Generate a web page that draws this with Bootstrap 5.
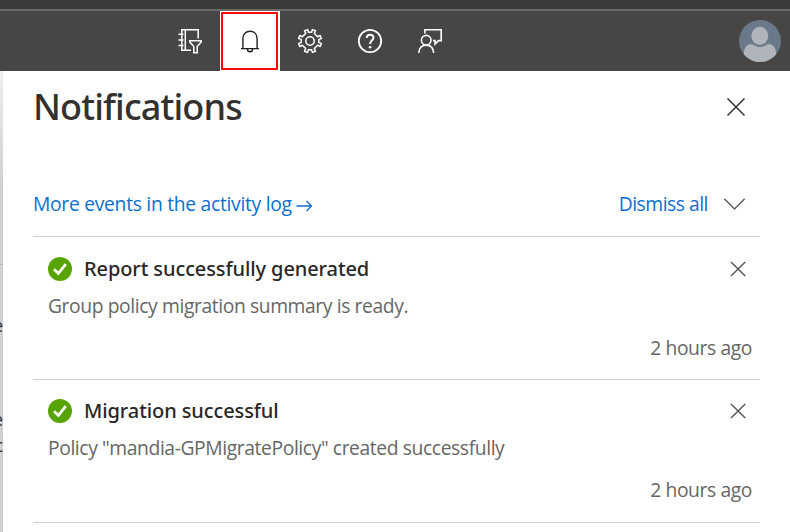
<!DOCTYPE html>
<html lang="en">
<head>
<meta charset="utf-8">
<meta name="viewport" content="width=device-width, initial-scale=1">
<title>Notifications</title>
<link href="https://cdn.jsdelivr.net/npm/bootstrap@5.3.0/dist/css/bootstrap.min.css" rel="stylesheet">
<style>
body{font-family:"Open Sans","Noto Sans",sans-serif;font-size:19.3px;line-height:26px;height:532px;background:#fff;color:#323130}
svg{display:block;fill:none;flex:none}
.window-strip{height:11px;background:#3a3a3a;border-bottom:2px solid #69696a}
.top-bar{height:60px;background:#484644;padding-left:160px;padding-right:9px}
.tool{width:60px;height:60px;padding:0;border:0;border-radius:0;color:#fff}
.tool-active{background:#fff;color:#222;padding:1px 2px 1px 1px}
.tool-active span{width:57px;height:58px;border:2px solid #fb0a0a}
.main-row{height:461px}
.page-edge{width:3px;background:linear-gradient(#efefef,#d0d0d0 110px);font-size:18px;line-height:26px;color:#333;direction:rtl}
.edge-rule{height:1px;margin-top:193px;background:#b5b5b5}
.edge-text{width:3px;height:26px}
.edge-a{margin-top:47px}.edge-b{margin-top:68px}
.panel-area{padding:0 30px}
.panel-head{height:71px}
.panel-title{font-family:"Noto Sans","Open Sans",sans-serif;font-size:36px;line-height:50px;font-weight:500;letter-spacing:-.85px}
.action-row{height:65px;margin-top:30px;border-bottom:1px solid #d2d0ce}
.action-row a{color:#0b6fcf}
.link-more{letter-spacing:-.29px}
.link-dismiss{letter-spacing:-.48px}
.note{height:143px;border-bottom:1px solid #d2d0ce;padding:18px 8px 0 15px}
.action-row + .note{padding-top:19px}
.note-title{font-family:"Noto Sans","Open Sans",sans-serif;font-size:20px;font-weight:500;color:#292827;letter-spacing:-.1px}
.note-copy{color:#666;margin-top:11px;letter-spacing:-.4px}
.note-time{color:#666;margin-top:16px;letter-spacing:-.4px}
.note-close{margin-right:4px}
.plain-btn{border:0;padding:0;background:none}
</style>
<script src="https://cdn.jsdelivr.net/npm/bootstrap@5.3.0/dist/js/bootstrap.bundle.min.js"></script>
</head>
<body class="overflow-hidden">
<div class="window-strip"></div>
<header class="top-bar d-flex align-items-center">
  <button class="btn tool d-flex align-items-center justify-content-center" aria-label="Directories">
    <svg width="26" height="26" viewBox="0 0 26 26" stroke="currentColor" stroke-width="1.5"><path d="M14 22.2H4.8V1.8H21.2V10.5M8.3 1.8V22M1.5 6.3H6.5M1.5 12H6.5M1.5 17.6H6.5M12.8 12.8H24.2V14L20.2 18.5V24.7H16.8V18.5L12.8 14Z"/></svg>
  </button>
  <button class="btn tool tool-active" aria-label="Notifications"><span class="d-flex align-items-center justify-content-center">
    <svg width="20" height="24" viewBox="0 0 20 24" stroke="currentColor" stroke-width="1.4"><path d="M1 19.6H19M2.9 19.4V9.4C2.9 5 6 2.3 10 2.3S17.1 5 17.1 9.4V19.4M7.4 20C7.4 21.8 8.5 22.8 10 22.8S12.6 21.8 12.6 20"/></svg>
  </span></button>
  <button class="btn tool d-flex align-items-center justify-content-center" aria-label="Settings">
    <svg width="26" height="26" viewBox="0 0 26 26" stroke="currentColor" stroke-width="1.5"><circle cx="13" cy="13" r="4.2"/><path stroke-linejoin="round" d="M11.4 4.2 10.6 1.6 7.5 2.8 8.7 5.4 5.4 8.7 2.8 7.5 1.6 10.6 4.2 11.4V14.6L1.6 15.4 2.8 18.5 5.4 17.3 8.7 20.6 7.5 23.2 10.6 24.4 11.4 21.8H14.6L15.4 24.4 18.5 23.2 17.3 20.6 20.6 17.3 23.2 18.5 24.4 15.4 21.8 14.6V11.4L24.4 10.6 23.2 7.5 20.6 8.7 17.3 5.4 18.5 2.8 15.4 1.6 14.6 4.2Z"/></svg>
  </button>
  <button class="btn tool d-flex align-items-center justify-content-center" aria-label="Help">
    <svg width="26" height="26" viewBox="0 0 26 26" stroke="currentColor" stroke-width="1.8"><circle cx="13" cy="13" r="11.2"/><path stroke-width="2" d="M9.7 9.8C9.9 7.7 11.2 6.8 13.1 6.8C15.1 6.8 16.4 7.9 16.4 9.7C16.4 12.5 13.1 12.4 13.1 16"/><circle cx="13.1" cy="19.3" r="1.3" fill="currentColor" stroke="none"/></svg>
  </button>
  <button class="btn tool d-flex align-items-center justify-content-center" aria-label="Feedback">
    <svg width="26" height="26" viewBox="0 0 26 26" stroke="currentColor" stroke-width="1.6"><circle cx="9.2" cy="12.2" r="4.8"/><path d="M1.8 25C2 20 5 17.1 9.2 17.1S16.3 20 16.7 25M7.9 5.6V1.8H24.2V12.6H21.5L18 16V12.6H16"/></svg>
  </button>
  <svg class="ms-auto" width="42" height="42" viewBox="0 0 42 42"><defs><clipPath id="avatar"><circle cx="21" cy="21" r="21"/></clipPath></defs><circle cx="21" cy="21" r="21" fill="#69798a"/><g clip-path="url(#avatar)" fill="#afb5ba"><path d="M5 42V33C5 27 8.5 24 13 24C18 28 24 28 29 24C33.5 24 37 27 37 33V42Z"/><ellipse cx="20.8" cy="15.8" rx="8.5" ry="9"/></g></svg>
</header>
<div class="main-row d-flex">
  <aside class="page-edge flex-shrink-0" aria-hidden="true">
    <div class="edge-rule"></div>
    <div class="edge-text edge-a overflow-hidden">e</div>
    <div class="edge-text edge-b overflow-hidden">e</div>
    <div class="edge-text overflow-hidden">c</div>
  </aside>
  <main class="panel-area flex-grow-1">
    <div class="panel-head d-flex align-items-center justify-content-between">
      <h1 class="panel-title m-0">Notifications</h1>
      <button class="plain-btn pe-3" aria-label="Close"><svg width="16" height="18" viewBox="1 0 16 18" overflow="visible" stroke="#323130" stroke-width="1.5"><path d="M.5.5 17.5 17.5M17.5.5.5 17.5"/></svg></button>
    </div>
    <div class="action-row d-flex align-items-center">
      <a href="#" class="text-decoration-none d-flex align-items-center"><span class="link-more">More events in the activity log</span>
        <svg class="ms-1 mt-1" width="17" height="14" viewBox="0 0 17 14" stroke="currentColor" stroke-width="1.3"><path d="M.5 7H15.5M10.5 2 15.5 7 10.5 12"/></svg></a>
      <a href="#" class="text-decoration-none ms-auto link-dismiss">Dismiss all</a>
      <svg class="ms-3 me-3" width="20" height="12" viewBox="1 0 20 12" overflow="visible" stroke="#605e5c" stroke-width="1.5"><path d="M1.3.8 11.5 11 21.7.8"/></svg>
    </div>
    <article class="note">
      <div class="d-flex align-items-center">
        <svg width="24" height="24" viewBox="0 0 24 24"><circle cx="12" cy="12" r="12" fill="#57a300"/><path d="M6 12.2 10.4 16.4 17.8 7.1" stroke="#fff" stroke-width="2.7"/></svg>
        <span class="note-title ms-2 ps-1">Report successfully generated</span>
        <button class="plain-btn ms-auto note-close" aria-label="Dismiss"><svg width="20" height="16" viewBox="0 0 20 16" stroke="#555" stroke-width="1.4"><path d="M3 .9 17.2 15.1M17.2.9 3 15.1"/></svg></button>
      </div>
      <div class="note-copy">Group policy migration summary is ready.</div>
      <div class="note-time text-end">2 hours ago</div>
    </article>
    <article class="note">
      <div class="d-flex align-items-center">
        <svg width="24" height="24" viewBox="0 0 24 24"><circle cx="12" cy="12" r="12" fill="#57a300"/><path d="M6 12.2 10.4 16.4 17.8 7.1" stroke="#fff" stroke-width="2.7"/></svg>
        <span class="note-title ms-2 ps-1">Migration successful</span>
        <button class="plain-btn ms-auto note-close" aria-label="Dismiss"><svg width="20" height="16" viewBox="0 0 20 16" stroke="#555" stroke-width="1.4"><path d="M3 .9 17.2 15.1M17.2.9 3 15.1"/></svg></button>
      </div>
      <div class="note-copy">Policy "mandia-GPMigratePolicy" created successfully</div>
      <div class="note-time text-end">2 hours ago</div>
    </article>
  </main>
</div>
</body>
</html>
